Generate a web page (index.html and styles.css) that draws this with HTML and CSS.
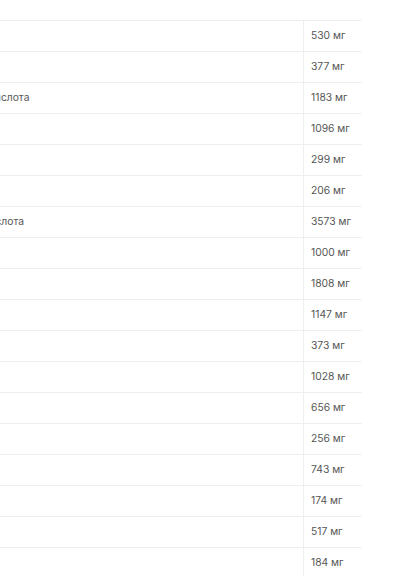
FILE: index.html
```html
<!DOCTYPE html>
<html>
	<head>
		<meta charset=utf-8>
		<meta name="viewport" content="width=device-width, initial-scale=1">
		<title>Аминокислоты</title>
		<link rel="stylesheet" href="styles.css">
	</head>
	<body>
		<div class="page">
			<table class="amino">
				<tr><td class="name">Аланин</td><td class="value">530 мг</td></tr>
				<tr><td class="name">Аргинин</td><td class="value">377 мг</td></tr>
				<tr><td class="name">Аспарагиновая кислота</td><td class="value">1183 мг</td></tr>
				<tr><td class="name">Валин</td><td class="value">1096 мг</td></tr>
				<tr><td class="name">Гистидин</td><td class="value">299 мг</td></tr>
				<tr><td class="name">Глицин</td><td class="value">206 мг</td></tr>
				<tr><td class="name">Глутаминовая кислота</td><td class="value">3573 мг</td></tr>
				<tr><td class="name">Изолейцин</td><td class="value">1000 мг</td></tr>
				<tr><td class="name">Лейцин</td><td class="value">1808 мг</td></tr>
				<tr><td class="name">Лизин</td><td class="value">1147 мг</td></tr>
				<tr><td class="name">Метионин</td><td class="value">373 мг</td></tr>
				<tr><td class="name">Пролин</td><td class="value">1028 мг</td></tr>
				<tr><td class="name">Серин</td><td class="value">656 мг</td></tr>
				<tr><td class="name">Тирозин</td><td class="value">256 мг</td></tr>
				<tr><td class="name">Треонин</td><td class="value">743 мг</td></tr>
				<tr><td class="name">Триптофан</td><td class="value">174 мг</td></tr>
				<tr><td class="name">Фенилаланин</td><td class="value">517 мг</td></tr>
				<tr><td class="name">Цистеин</td><td class="value">184 мг</td></tr>
			</table>
		</div>
	</body>
</html>
```
FILE: styles.css
```css
body { margin: 0; padding: 0; background: #fff; overflow: hidden; }

.page {
	width: 414px;
	height: 576px;
	overflow: hidden;
	padding-top: 20px;
	box-sizing: border-box;
}

.amino {
	border-collapse: collapse;
	margin-left: -98px;
	width: 460px;
	font-family: 'Inter', 'Noto Sans', sans-serif;
	font-size: 10.3px;
	color: #555;
}
.amino td {
	height: 28px;
	padding: 0 7px 2px;
	border-top: 1px solid #efefef;
	vertical-align: middle;
	white-space: nowrap;
}
.amino .value {
	width: 44px;
	border-left: 1px solid #efefef;
}
```
